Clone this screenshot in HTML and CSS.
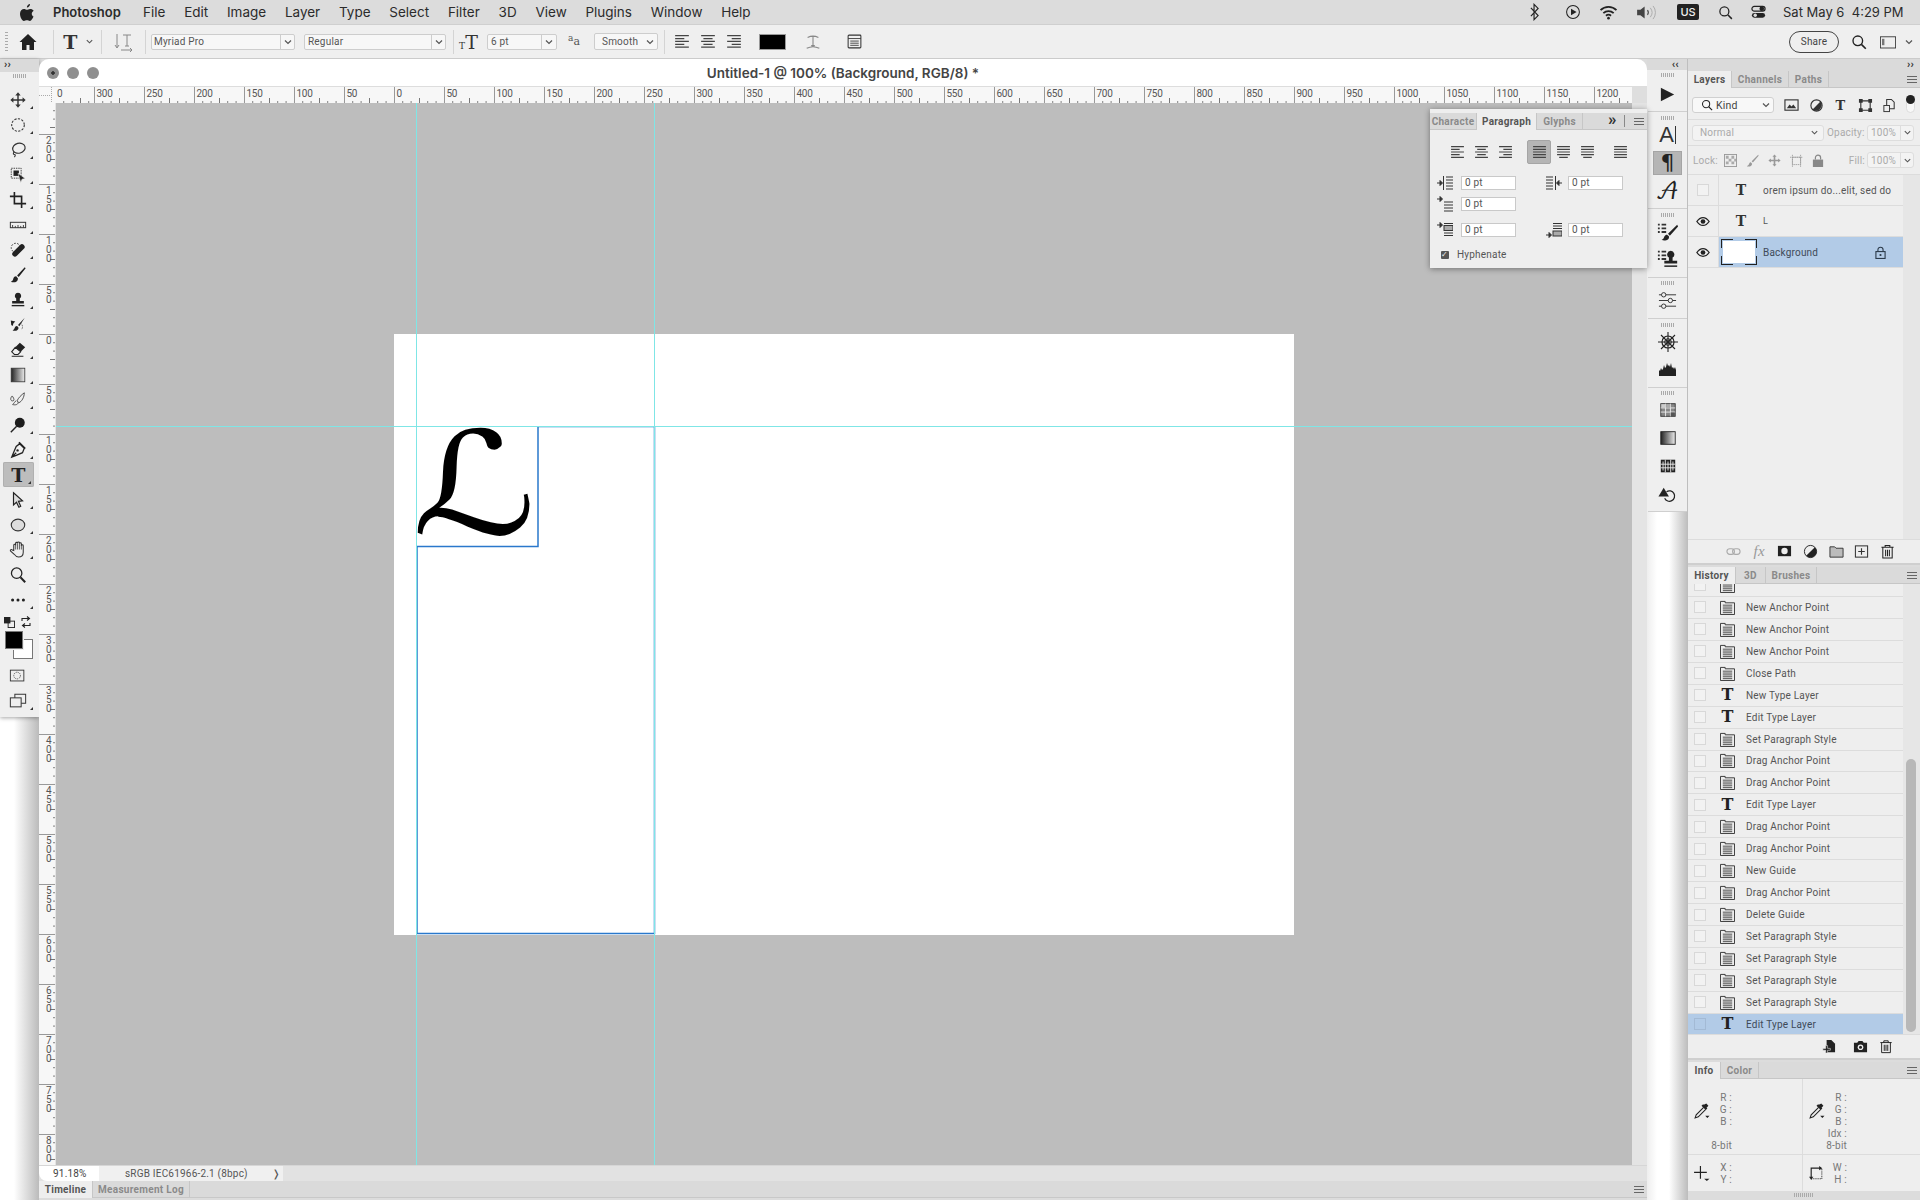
FILE: index.html
```html
<!DOCTYPE html>
<html lang="en">
<head>
  <meta charset="UTF-8">
  <meta name="viewport" content="width=device-width, initial-scale=1.0">
  <title>Photoshop</title>
  <link rel="stylesheet" href="styles.css">
</head>
<body>
  <svg class="sprites" width="0" height="0">
    <defs>
      <linearGradient id="grad-bw" x1="0" x2="1" y1="0" y2="0"><stop offset="0" stop-color="#222"/><stop offset="1" stop-color="#eee"/></linearGradient>
    </defs>
    <symbol id="i-move" viewBox="0 0 20 20"><path fill="#333" d="M10 1.500l3 3.400h-2.200v4.300h4.300V7l3.400 3-3.400 3v-2.200h-4.300v4.300H13l-3 3.400-3-3.400h2.200v-4.300H4.900V13l-3.400-3 3.400-3v2.200h4.300V4.900H7z"/></symbol>
    <symbol id="i-marquee" viewBox="0 0 20 20"><circle cx="10" cy="10" r="7" fill="none" stroke="#333" stroke-width="1.200" stroke-dasharray="2.500 1.500"/></symbol>
    <symbol id="i-lasso" viewBox="0 0 20 20"><ellipse cx="11" cy="8" rx="7" ry="5.500" fill="none" stroke="#333" stroke-width="1.300" transform="rotate(-15 11 8)"/><path d="M6 12c-2 2-1 3 0 3s1.500 1 0 3" fill="none" stroke="#333" stroke-width="1.300"/></symbol>
    <symbol id="i-objsel" viewBox="0 0 20 20"><rect x="2.500" y="2.500" width="11" height="11" fill="none" stroke="#333" stroke-dasharray="1.600 1"/><rect x="5" y="5" width="6" height="6" fill="#222"/><path fill="#222" stroke="#eee" stroke-width=".6" d="M10 8l8 6-3.500.6-1.500 3.600z"/></symbol>
    <symbol id="i-crop" viewBox="0 0 20 20"><path d="M6 1v13h13M1 6h13v13" fill="none" stroke="#222" stroke-width="1.800"/></symbol>
    <symbol id="i-ruler" viewBox="0 0 20 20"><rect x="1.500" y="7" width="17" height="6" fill="none" stroke="#333" stroke-width="1.100"/><path d="M4 13v-3M7 13v-2M10 13v-3M13 13v-2M16 13v-3" stroke="#333"/></symbol>
    <symbol id="i-heal" viewBox="0 0 20 20"><circle cx="7.500" cy="7.500" r="5" fill="none" stroke="#333" stroke-dasharray="2 1.500"/><rect x="2" y="7.500" width="17" height="6" rx="3" fill="#222" transform="rotate(-45 10.500 10.500)"/></symbol>
    <symbol id="i-brush" viewBox="0 0 20 20"><path fill="#222" d="M17.500 1.500L9 10.500l1.800 1.800L18.500 2.500zM8 11.500c-2.500 0-3 2-3.400 3.200C4.300 16 3.500 17 2 17.500c3 1.300 8 .7 8-3.700z"/></symbol>
    <symbol id="i-stamp" viewBox="0 0 20 20"><path fill="#222" d="M10 2a3.500 3.500 0 0 1 2 6.400V11h4.500v3h-13v-3H8V8.400A3.500 3.500 0 0 1 10 2z"/><rect x="3" y="15.500" width="14" height="1.500" fill="#222"/></symbol>
    <symbol id="i-histbrush" viewBox="0 0 20 20"><path fill="#222" d="M17.500 2L10 10l1.500 1.500zM9 11c-2 0-2.500 1.500-3 3-.3 1-1 1.500-2 2 2.500 1 7 .3 6.500-3.300zM2 5l5 1-2 2-1 3-1.500-1z"/><path d="M13 8a5 5 0 0 1 1 7" fill="none" stroke="#555" stroke-dasharray="1.500 1"/></symbol>
    <symbol id="i-eraser" viewBox="0 0 20 20"><path fill="#222" d="M12 2l6 5-5 5-6-5z"/><path fill="none" stroke="#222" stroke-width="1.200" d="M7 7l6 5-3 3H6l-3-3zM3 17h13"/></symbol>
    <symbol id="i-gradient" viewBox="0 0 20 20"><rect x="1.500" y="1.500" width="17" height="17" fill="url(#grad-bw)" stroke="#333"/></symbol>
    <symbol id="i-mixer" viewBox="0 0 20 20"><path d="M17 2c-3 2-7 6-8 9l2 2c3-1 6-6 6-11zM8 11c-2 .5-2 3-4 4 3 1 7 0 6-3M3 6c-2 3-1 5 1 5s2-2 0-5z" fill="none" stroke="#444" stroke-width="1"/></symbol>
    <symbol id="i-dodge" viewBox="0 0 20 20"><circle cx="12" cy="7.500" r="5.500" fill="#1c1c1c"/><path d="M8.500 11.500L2 18" stroke="#222" stroke-width="1.600"/></symbol>
    <symbol id="i-pen" viewBox="0 0 20 20"><path d="M12 3l5 5-2 5-7 3-5 2 2-5 3-7zM3 18l5-5" fill="none" stroke="#222" stroke-width="1.400"/><circle cx="9.500" cy="10.500" r="1.300" fill="#222"/><path d="M11 1.500l7 7" stroke="#222" stroke-width="2"/></symbol>
    <symbol id="i-arrow" viewBox="0 0 20 20"><path d="M5 2l10 9-4.500.5L13 17l-2 1-2.700-5.500L5 15.500z" fill="#ddd" stroke="#222" stroke-width="1.300"/></symbol>
    <symbol id="i-ellipse" viewBox="0 0 20 20"><ellipse cx="10" cy="10" rx="7.500" ry="6.500" fill="#ddd" stroke="#333" stroke-width="1.200"/></symbol>
    <symbol id="i-hand" viewBox="0 0 20 20"><path d="M5 11V5.500a1 1 0 0 1 2 0V3.500a1 1 0 0 1 2 0V3a1 1 0 0 1 2 0v1a1 1 0 0 1 2 0v2a1 1 0 0 1 2 0v7c0 3-2 5-5 5-2 0-3-1-4.500-3L1.500 11.500c-.5-1 1-2 2-1z" fill="none" stroke="#333" stroke-width="1.100"/><path d="M7 5v5M9 3.500V10M11 4v6M13 5v5" stroke="#333" stroke-width=".8"/></symbol>
    <symbol id="i-zoom" viewBox="0 0 20 20"><circle cx="8.500" cy="8" r="5.800" fill="#eee" stroke="#222" stroke-width="1.400"/><path d="M12.700 12.500l5.300 5.500" stroke="#222" stroke-width="2.200"/></symbol>
    <symbol id="i-dots" viewBox="0 0 20 20"><circle cx="4" cy="10" r="1.700" fill="#222"/><circle cx="10" cy="10" r="1.700" fill="#222"/><circle cx="16" cy="10" r="1.700" fill="#222"/></symbol>
    <symbol id="i-swap" viewBox="0 0 12 12"><path d="M2 5V2.500h7M7 .5l2.500 2L7 4.500M10 7v2.500H3M5 7.500l-2.500 2 2.500 2" fill="none" stroke="#222" stroke-width="1.100"/></symbol>
    <symbol id="i-defaults" viewBox="0 0 12 12"><rect x="4.500" y="4.500" width="7" height="7" fill="#eee" stroke="#222"/><rect x="0" y="0" width="7" height="7" fill="#222"/></symbol>
    <symbol id="i-mask" viewBox="0 0 20 20"><rect x="1.500" y="3.500" width="15" height="12" fill="none" stroke="#333"/><circle cx="9" cy="9.500" r="3.700" fill="none" stroke="#444" stroke-dasharray="1.200 1"/></symbol>
    <symbol id="i-screen" viewBox="0 0 20 20"><rect x="6.500" y="2.500" width="12" height="10" fill="none" stroke="#333" stroke-width="1.100"/><rect x="1.500" y="6.500" width="12" height="10" fill="#eee" stroke="#333" stroke-width="1.100"/></symbol>

    <symbol id="i-home" viewBox="0 0 20 20"><path fill="#222" d="M10 2L1.500 10H4v8h4.500v-5h3v5H16v-8h2.500z"/></symbol>
    <symbol id="i-chev" viewBox="0 0 10 10"><path d="M2 3.500l3 3 3-3" fill="none" stroke="#555" stroke-width="1.200"/></symbol>
    <symbol id="i-orient" viewBox="0 0 20 20"><path d="M9 3h8M13 3v11M11 14h4M3 2v13M1 13l2 3 2-3M7 18h11M16 16l2 2-2 2" fill="none" stroke="#888" stroke-width="1"/></symbol>
    <symbol id="i-warp" viewBox="0 0 20 20"><path d="M4 5c4-2 8-2 12 0M10 3.500V14M8 14h4M3 17c4-2 10-2 14 0" fill="none" stroke="#888" stroke-width="1.200"/></symbol>
    <symbol id="i-charpanel" viewBox="0 0 20 20"><rect x="2.500" y="2.500" width="15" height="15" rx="1" fill="none" stroke="#333" stroke-width="1.200"/><path d="M2.500 6.500h15M5 9.500h10M5 12h10M5 14.500h10" stroke="#333"/></symbol>
    <symbol id="i-search" viewBox="0 0 20 20"><circle cx="8.500" cy="8.500" r="6" fill="none" stroke="#222" stroke-width="1.700"/><path d="M13 13l5.500 5.500" stroke="#222" stroke-width="2"/></symbol>
    <symbol id="i-workspace" viewBox="0 0 20 20"><rect x=".5" y="3.500" width="19" height="14" fill="none" stroke="#333" stroke-width="1.100"/><rect x="2.500" y="6" width="3" height="8" fill="#777"/></symbol>
    <symbol id="i-bt" viewBox="0 0 12 20"><path d="M2 5.500l8 8.500-4.500 4.500v-17l4.500 4.500-8 8.500" fill="none" stroke="#222" stroke-width="1.300"/></symbol>
    <symbol id="i-playc" viewBox="0 0 20 20"><circle cx="10" cy="10" r="8" fill="none" stroke="#222" stroke-width="1.300"/><path d="M7.500 6l7 4-7 4z" fill="#222"/></symbol>
    <symbol id="i-wifi" viewBox="0 0 20 16"><path d="M1.500 5.500a12 12 0 0 1 17 0M4.500 8.700a8 8 0 0 1 11 0M7.300 11.500a4 4 0 0 1 5.400 0" fill="none" stroke="#222" stroke-width="1.900"/><circle cx="10" cy="14" r="1.400" fill="#222"/></symbol>
    <symbol id="i-vol" viewBox="0 0 22 16"><path fill="#444" d="M1 5h3.500L9 1.500v13L4.500 11H1z"/><path d="M12 5.500a4 4 0 0 1 0 5" fill="none" stroke="#555" stroke-width="1.300"/><path d="M15 3a8 8 0 0 1 0 10M18 1a11 11 0 0 1 0 14" fill="none" stroke="#aaa" stroke-width="1"/></symbol>
    <symbol id="i-cc" viewBox="0 0 16 14"><rect x="1" y="1" width="14" height="5" rx="2.500" fill="none" stroke="#222" stroke-width="1.300"/><circle cx="11.500" cy="3.500" r="2.500" fill="#222"/><rect x="1" y="8" width="14" height="5" rx="2.500" fill="#222"/><circle cx="4.500" cy="10.500" r="1.800" fill="#ddd"/></symbol>

    <symbol id="i-play" viewBox="0 0 20 20"><path fill="#222" d="M3 3l14 7-14 7z"/></symbol>
    <symbol id="i-listbrush" viewBox="0 0 24 24"><path d="M1 3h2v2H1zM5 3h5v2H5zM1 7h2v2H1zM5 7h5v2H5zM1 11h2v2H1zM5 11h5v2H5z" fill="#333"/><path fill="#222" d="M22 4L12 14l2 2L23 6zM11 15c-3 0-3 3-4 4-.5.700-1 1-2 1.500 3 1.500 9 .5 8-4z"/></symbol>
    <symbol id="i-liststamp" viewBox="0 0 24 24"><path d="M1 3h2v2H1zM5 3h5v2H5zM1 7h2v2H1zM5 7h5v2H5zM1 11h2v2H1zM5 11h5v2H5z" fill="#333"/><path fill="#222" d="M15 3a4 4 0 0 1 2 7.400V14h5v3H8v-3h5v-3.600A4 4 0 0 1 15 3z"/><rect x="8" y="19" width="14" height="1.600" fill="#222"/></symbol>
    <symbol id="i-sliders" viewBox="0 0 20 20"><path d="M1 4h18M1 10h18M1 16h18" stroke="#333"/><circle cx="6" cy="4" r="2.300" fill="#eee" stroke="#333"/><circle cx="13" cy="10" r="2.300" fill="#eee" stroke="#333"/><circle cx="6" cy="16" r="2.300" fill="#eee" stroke="#333"/></symbol>
    <symbol id="i-web" viewBox="0 0 20 20"><circle cx="10" cy="10" r="6" fill="none" stroke="#222" stroke-width="1.200"/><circle cx="10" cy="10" r="3.300" fill="none" stroke="#222"/><path d="M10 0v20M0 10h20M3 3l14 14M17 3L3 17" stroke="#222" stroke-width="1.100"/></symbol>
    <symbol id="i-histo" viewBox="0 0 20 20"><path fill="#222" d="M1 17v-6l1 1 1-3 1 2 1-1 1-4 1 3 1-1 1-4 1 3 1-1 1 2 1-4 1 5 1-1 1 2 1-2 1 3v6z"/></symbol>
    <symbol id="i-swatches" viewBox="0 0 20 20"><rect x="2" y="3" width="16" height="14" fill="#888" stroke="#333"/><path d="M2 7.700h16M2 12.300h16M7.300 3v14M12.700 3v14" stroke="#eee"/><rect x="2.500" y="3.500" width="5" height="4" fill="#ccc"/><rect x="8" y="3.500" width="4.500" height="4" fill="#aaa"/><rect x="13" y="12.700" width="4.500" height="4" fill="#555"/></symbol>
    <symbol id="i-gradbox" viewBox="0 0 20 20"><rect x="2" y="3" width="16" height="14" fill="url(#grad-bw)" stroke="#222"/></symbol>
    <symbol id="i-pattern" viewBox="0 0 20 20"><rect x="2" y="3" width="16" height="14" fill="#222"/><path d="M7 3v14M13 3v14M2 8h16M2 12h16M4.500 5v10M10 5v10M15.500 5v10" stroke="#eee"/></symbol>
    <symbol id="i-histback" viewBox="0 0 20 20"><path fill="#222" d="M6 3l5.500 9H.5z"/><path d="M9 7a5.500 5.500 0 1 1-2 7" fill="none" stroke="#222" stroke-width="1.300"/></symbol>

    <symbol id="i-doc" viewBox="0 0 16 16"><path d="M.5 1.500h5v1.500h10v12.500H.5z" fill="none" stroke="#333"/><path d="M3 5.500h10M3 7.500h10M3 9.500h10M3 11.500h10M3 13.500h10" stroke="#333" stroke-width=".9"/></symbol>
    <symbol id="i-eye" viewBox="0 0 16 12"><path d="M1 6c2-3 4.500-4.500 7-4.500S13 3 15 6c-2 3-4.500 4.500-7 4.500S3 9 1 6z" fill="none" stroke="#222" stroke-width="1.500"/><circle cx="8" cy="6" r="2.700" fill="#222"/></symbol>
    <symbol id="i-lock" viewBox="0 0 12 14"><path d="M3.200 6V4a2.800 2.800 0 0 1 5.600 0v2" fill="none" stroke="currentColor" stroke-width="1.200"/><rect x="1" y="6" width="10" height="7.500" fill="none" stroke="currentColor" stroke-width="1.200"/><circle cx="6" cy="9.700" r="1.200" fill="currentColor"/></symbol>
    <symbol id="i-lockfill" viewBox="0 0 12 14"><path d="M3.200 6V4a2.800 2.800 0 0 1 5.600 0v2" fill="none" stroke="#888" stroke-width="1.300"/><rect x=".5" y="6" width="11" height="8" fill="#888"/></symbol>
    <symbol id="i-f-image" viewBox="0 0 16 16"><rect x="1" y="2" width="14" height="11" fill="none" stroke="#333" stroke-width="1.200"/><path d="M3 11l3-4 2 2 2-2 3 4z" fill="#333"/></symbol>
    <symbol id="i-f-adj" viewBox="0 0 16 16"><circle cx="8" cy="8" r="6" fill="none" stroke="#333" stroke-width="1.200"/><path d="M8 8l4.200-4.200A6 6 0 0 1 3.800 12.200z" fill="#333"/></symbol>
    <symbol id="i-f-shape" viewBox="0 0 16 16"><path d="M3 3h10v10H3z" fill="none" stroke="#333" stroke-width="1.200"/><path d="M1 1h4v4H1zM11 1h4v4h-4zM1 11h4v4H1zM11 11h4v4h-4z" fill="#333"/></symbol>
    <symbol id="i-f-smart" viewBox="0 0 16 16"><path d="M5 1.500h5l3 3v7H5z" fill="none" stroke="#333" stroke-width="1.100"/><rect x="2" y="8" width="6" height="6.500" fill="#eee" stroke="#333"/></symbol>
    <symbol id="i-checker" viewBox="0 0 14 14"><rect x=".5" y=".5" width="13" height="13" fill="#eee" stroke="#999"/><path d="M2 2h3v3H2zM8 2h3v3H8zM5 5h3v3H5zM11 5h2v3h-2zM2 8h3v3H2zM8 8h3v3H8z" fill="#aaa"/></symbol>
    <symbol id="i-lbrush" viewBox="0 0 16 16"><path fill="#999" d="M15 1L7 9l1.500 1.500L15.500 2zM6 10c-2 0-2 2-3 3.500L1 15c2 1 6.500.5 6.500-3z"/></symbol>
    <symbol id="i-lmove" viewBox="0 0 16 16"><path fill="#999" d="M8 .5l2.500 3H9v3.500h3.500V5.500l3 2.500-3 2.500V9H9v3.500h1.500L8 15.500l-2.500-3H7V9H3.500v1.500l-3-2.500 3-2.500V7H7V3.500H5.500z"/></symbol>
    <symbol id="i-lart" viewBox="0 0 16 16"><path d="M3 4h10v9H3zM0 4h16M3 1v15M13 1v15" fill="none" stroke="#999" stroke-dasharray="1.800 .8"/></symbol>

    <symbol id="i-link" viewBox="0 0 16 16"><rect x="1" y="5" width="8" height="6" rx="3" fill="none" stroke="#aaa" stroke-width="1.200"/><rect x="7" y="5" width="8" height="6" rx="3" fill="none" stroke="#aaa" stroke-width="1.200"/></symbol>
    <symbol id="i-addmask" viewBox="0 0 16 16"><rect x="1" y="2" width="14" height="11" fill="#222"/><circle cx="8" cy="7.500" r="3.400" fill="#eee"/></symbol>
    <symbol id="i-adjust" viewBox="0 0 16 16"><circle cx="8" cy="8" r="6.500" fill="#eee" stroke="#222"/><path d="M8 8l4.600-4.600A6.500 6.500 0 0 1 3.400 12.600z" fill="#222"/></symbol>
    <symbol id="i-folder" viewBox="0 0 16 16"><path d="M1 3h5l1.500 1.500H15V14H1z" fill="#bbb" stroke="#333"/></symbol>
    <symbol id="i-new" viewBox="0 0 16 16"><rect x="1.500" y="2" width="13" height="12" fill="none" stroke="#333" stroke-width="1.100"/><path d="M8 4.500v7M4.500 8h7" stroke="#333" stroke-width="1.200"/></symbol>
    <symbol id="i-trash" viewBox="0 0 16 16"><path d="M1.500 3.500h13M5.500 3.500V1.500h5v2M3 3.500V15h10V3.500M6 6v7M8 6v7M10 6v7" fill="none" stroke="#222" stroke-width="1.100"/></symbol>
    <symbol id="i-newdoc" viewBox="0 0 16 16"><path fill="#222" d="M6 1h5l4 4v9H6z"/><path d="M5 7v3H2v2h3v3h2v-3h3v-2H7V7z" fill="#222" stroke="#eee" stroke-width=".6"/></symbol>
    <symbol id="i-camera" viewBox="0 0 16 16"><path fill="#222" d="M1 4h3.500L6 2h4l1.500 2H15v10H1z"/><circle cx="8" cy="8.800" r="3" fill="#eee"/><circle cx="8" cy="8.800" r="1.600" fill="#222"/></symbol>
    <symbol id="i-dropper" viewBox="0 0 16 16"><path d="M10 5L3 12l-1 3 3-1 7-7" fill="#eee" stroke="#222"/><path fill="#222" d="M12.500 1.500l2 2-1.700 1.800.7.700-1.500 1.500-4-4L9.500 2l.7.700z"/><path d="M11.500 13h4l-2 2z" fill="#222"/></symbol>
    <symbol id="i-cross" viewBox="0 0 16 16"><path d="M7 1v12M1 7h12" stroke="#222" stroke-width="1.100"/><path d="M10.500 13h5l-2.500 2z" fill="#222"/></symbol>
    <symbol id="i-rectsel" viewBox="0 0 16 16"><path d="M3 12V3h9" fill="none" stroke="#222" stroke-width="1.100"/><path d="M3 13h10V3" fill="none" stroke="#222" stroke-dasharray="1 1"/><path d="M10.500 1l3 2-3 2zM1 11l2 3 2-3z" fill="#222"/></symbol>

    <symbol id="a-left" viewBox="0 0 14 14"><path d="M1 1.500h12M1 4h8M1 6.500h12M1 9h8M1 11.500h12" stroke="#444" stroke-width="1.100"/></symbol>
    <symbol id="a-center" viewBox="0 0 14 14"><path d="M1 1.500h12M3 4h8M1 6.500h12M3 9h8M1 11.500h12" stroke="#444" stroke-width="1.100"/></symbol>
    <symbol id="a-right" viewBox="0 0 14 14"><path d="M1 1.500h12M5 4h8M1 6.500h12M5 9h8M1 11.500h12" stroke="#444" stroke-width="1.100"/></symbol>
    <symbol id="a-full" viewBox="0 0 14 14"><path d="M1 1.500h12M1 4h12M1 6.500h12M1 9h12M1 11.500h12" stroke="#444" stroke-width="1.100"/></symbol>
    <symbol id="a-full2" viewBox="0 0 14 14"><path d="M1 1.500h12M1 4h12M1 6.500h12M1 9h12M3 11.500h8" stroke="#444" stroke-width="1.100"/></symbol>
    <symbol id="n-left" viewBox="0 0 16 16"><path d="M6.500 1v14M9 2h7M9 5h7M9 8h7M9 11h7M9 14h7" stroke="#333"/><path d="M0 8h3M3 5.500L5.500 8 3 10.500z" stroke="#333" fill="#333"/></symbol>
    <symbol id="n-right" viewBox="0 0 16 16"><path d="M9.500 1v14M0 2h7M0 5h7M0 8h7M0 11h7M0 14h7" stroke="#333"/><path d="M16 8h-3M13 5.500L10.500 8l2.500 2.500z" stroke="#333" fill="#333"/></symbol>
    <symbol id="n-first" viewBox="0 0 16 16"><path d="M7 6h9M7 9h9M7 12h9M7 15h9" stroke="#333"/><path d="M0 3h3M3 .5L5.500 3 3 5.500z" stroke="#333" fill="#333"/></symbol>
    <symbol id="n-before" viewBox="0 0 16 16"><path d="M7 1.500h9M7 11h9M7 13.500h9" stroke="#333"/><rect x="7" y="3.500" width="9" height="5" fill="#aaa" stroke="#333"/><path d="M0 3h3M3 .5L5.500 3 3 5.500z" stroke="#333" fill="#333"/></symbol>
    <symbol id="n-after" viewBox="0 0 16 16"><path d="M7 1.500h9M7 4h9M7 6.500h9" stroke="#333"/><rect x="7" y="9" width="9" height="5" fill="#aaa" stroke="#333"/><path d="M0 13h3M3 10.500L5.500 13 3 15.500z" stroke="#333" fill="#333"/></symbol>
  </svg>

  <header class="menubar">
    <svg class="apple" viewBox="0 0 14 17" width="14" height="17"><path fill="#222" d="M10 0c.2 1.500-1.400 3.600-3.100 3.500C6.700 1.900 8.400.1 10 0zM13.500 12.600c-.8 1.900-2 4.300-3.600 4.300-1.200 0-1.700-.7-3-.7s-1.900.7-3 .7C2 16.900 0 13 0 9.800 0 6.700 2 5 3.900 5c1.300 0 2.300.8 3.100.8S8.700 4.900 10.300 5c.7 0 2.500.3 3.400 1.800-2.800 1.700-2.300 5 0 5.800z"/></svg>
    <strong class="menu-app">Photoshop</strong>
    <nav class="menu-list">
      <span>File</span><span>Edit</span><span>Image</span><span>Layer</span><span>Type</span><span>Select</span><span>Filter</span><span>3D</span><span>View</span><span>Plugins</span><span>Window</span><span>Help</span>
    </nav>
    <div class="status-items">
      <svg class="st-bt" width="11" height="18"><use href="#i-bt"/></svg>
      <svg class="st-play" width="16" height="16"><use href="#i-playc"/></svg>
      <svg class="st-wifi" width="19" height="15"><use href="#i-wifi"/></svg>
      <svg class="st-vol" width="21" height="15"><use href="#i-vol"/></svg>
      <span class="st-us">US</span>
      <svg class="st-search" width="15" height="15"><use href="#i-search"/></svg>
      <svg class="st-cc" width="15" height="14"><use href="#i-cc"/></svg>
      <span class="st-clock">Sat May 6&nbsp;&nbsp;4:29 PM</span>
    </div>
  </header>

  <div class="optionsbar">
    <span class="opt-grip"></span>
    <svg class="opt-home" width="20" height="20"><use href="#i-home"/></svg>
    <span class="opt-div d1"></span>
    <span class="opt-t">T</span>
    <svg class="opt-caret" width="9" height="9"><use href="#i-chev"/></svg>
    <span class="opt-div d2"></span>
    <svg class="opt-orient" width="20" height="20"><use href="#i-orient"/></svg>
    <span class="opt-div d3"></span>
    <div class="opt-select sel-font"><span>Myriad Pro</span><i><svg width="10" height="10"><use href="#i-chev"/></svg></i></div>
    <div class="opt-select sel-style"><span>Regular</span><i><svg width="10" height="10"><use href="#i-chev"/></svg></i></div>
    <span class="opt-div d4"></span>
    <span class="opt-size"><small>T</small>T</span>
    <div class="opt-select sel-size"><span>6 pt</span><i><svg width="10" height="10"><use href="#i-chev"/></svg></i></div>
    <span class="opt-aa"><sup>a</sup>a</span>
    <div class="opt-select sel-aa"><span>Smooth</span><svg width="10" height="10"><use href="#i-chev"/></svg></div>
    <span class="opt-div d5"></span>
    <svg class="opt-a1" width="16" height="16"><use href="#a-left"/></svg>
    <svg class="opt-a2" width="16" height="16"><use href="#a-center"/></svg>
    <svg class="opt-a2" width="16" height="16"><use href="#a-right"/></svg>
    <span class="opt-swatch"></span>
    <svg class="opt-warp" width="18" height="18"><use href="#i-warp"/></svg>
    <svg class="opt-panel" width="17" height="17"><use href="#i-charpanel"/></svg>
    <button class="share-btn">Share</button>
    <svg class="opt-find" width="16" height="16"><use href="#i-search"/></svg>
    <svg class="opt-ws" width="16" height="16"><use href="#i-workspace"/></svg>
    <svg class="opt-wschev" width="10" height="10"><use href="#i-chev"/></svg>
  </div>

  <div class="workspace">
    <aside class="toolbox-wrap">
      <div class="toolbox">
        <div class="collapse-strip left">&rsaquo;&rsaquo;</div>
        <div class="grip"></div>
        <div class="tool more"><svg width="18" height="18"><use href="#i-move"/></svg></div>
        <div class="tool more"><svg width="18" height="18"><use href="#i-marquee"/></svg></div>
        <div class="tool more"><svg width="18" height="18"><use href="#i-lasso"/></svg></div>
        <div class="tool more"><svg width="18" height="18"><use href="#i-objsel"/></svg></div>
        <div class="tool more"><svg width="18" height="18"><use href="#i-crop"/></svg></div>
        <div class="tool more"><svg width="18" height="18"><use href="#i-ruler"/></svg></div>
        <div class="tool more"><svg width="18" height="18"><use href="#i-heal"/></svg></div>
        <div class="tool more"><svg width="18" height="18"><use href="#i-brush"/></svg></div>
        <div class="tool more"><svg width="18" height="18"><use href="#i-stamp"/></svg></div>
        <div class="tool more"><svg width="18" height="18"><use href="#i-histbrush"/></svg></div>
        <div class="tool more"><svg width="18" height="18"><use href="#i-eraser"/></svg></div>
        <div class="tool more"><svg width="16" height="16"><use href="#i-gradient"/></svg></div>
        <div class="tool more"><svg width="18" height="18"><use href="#i-mixer"/></svg></div>
        <div class="tool more"><svg width="18" height="18"><use href="#i-dodge"/></svg></div>
        <div class="tool more"><svg width="18" height="18"><use href="#i-pen"/></svg></div>
        <div class="tool more active"><span class="tool-t">T</span></div>
        <div class="tool more"><svg width="18" height="18"><use href="#i-arrow"/></svg></div>
        <div class="tool more"><svg width="18" height="18"><use href="#i-ellipse"/></svg></div>
        <div class="tool more"><svg width="19" height="19"><use href="#i-hand"/></svg></div>
        <div class="tool"><svg width="18" height="18"><use href="#i-zoom"/></svg></div>
        <div class="tool more"><svg width="18" height="18"><use href="#i-dots"/></svg></div>
        <div class="color-mini">
          <svg width="11" height="11"><use href="#i-defaults"/></svg>
          <svg width="12" height="12"><use href="#i-swap"/></svg>
        </div>
        <div class="color-big"><span class="bg-chip"></span><span class="fg-chip"></span></div>
        <div class="tool tool-mask"><svg width="18" height="18"><use href="#i-mask"/></svg></div>
        <div class="tool more tool-screen"><svg width="18" height="18"><use href="#i-screen"/></svg></div>
      </div>
    </aside>

    <main class="docwindow">
      <div class="doc-title">
        <span class="light first"></span><span class="light"></span><span class="light"></span>
        <span class="doc-name">Untitled-1 @ 100% (Background, RGB/8) *</span>
      </div>
      <div class="ruler-row">
        <div class="ruler-corner"></div>
        <div class="hruler">
          <div class="hcell stub"><span>0</span></div>
          <div class="hcell"><span>300</span></div><div class="hcell"><span>250</span></div><div class="hcell"><span>200</span></div><div class="hcell"><span>150</span></div><div class="hcell"><span>100</span></div><div class="hcell"><span>50</span></div><div class="hcell"><span>0</span></div>
          <div class="hcell"><span>50</span></div><div class="hcell"><span>100</span></div><div class="hcell"><span>150</span></div><div class="hcell"><span>200</span></div><div class="hcell"><span>250</span></div><div class="hcell"><span>300</span></div><div class="hcell"><span>350</span></div><div class="hcell"><span>400</span></div>
          <div class="hcell"><span>450</span></div><div class="hcell"><span>500</span></div><div class="hcell"><span>550</span></div><div class="hcell"><span>600</span></div><div class="hcell"><span>650</span></div><div class="hcell"><span>700</span></div><div class="hcell"><span>750</span></div><div class="hcell"><span>800</span></div>
          <div class="hcell"><span>850</span></div><div class="hcell"><span>900</span></div><div class="hcell"><span>950</span></div><div class="hcell"><span>1000</span></div><div class="hcell"><span>1050</span></div><div class="hcell"><span>1100</span></div><div class="hcell"><span>1150</span></div><div class="hcell"><span>1200</span></div>
        </div>
        <div class="ruler-end"></div>
      </div>
      <div class="doc-main">
        <div class="vruler">
          <div class="vcell stub"></div>
          <div class="vcell"><span>200</span></div><div class="vcell"><span>150</span></div><div class="vcell"><span>100</span></div><div class="vcell"><span>50</span></div><div class="vcell"><span>0</span></div>
          <div class="vcell"><span>50</span></div><div class="vcell"><span>100</span></div><div class="vcell"><span>150</span></div><div class="vcell"><span>200</span></div><div class="vcell"><span>250</span></div><div class="vcell"><span>300</span></div><div class="vcell"><span>350</span></div>
          <div class="vcell"><span>400</span></div><div class="vcell"><span>450</span></div><div class="vcell"><span>500</span></div><div class="vcell"><span>550</span></div><div class="vcell"><span>600</span></div><div class="vcell"><span>650</span></div><div class="vcell"><span>700</span></div><div class="vcell"><span>750</span></div><div class="vcell"><span>800</span></div>
        </div>
        <div class="canvas">
          <div class="page"></div>
          <svg class="textbox" width="240" height="510" viewBox="0 0 240 510"><path d="M122 .5H238.500V507.500H1V120.500H122z" fill="none" stroke="#2a78cc" stroke-width="1.500"/></svg>
          <span class="script-l">&#8466;</span>
          <span class="guide-v g1"></span>
          <span class="guide-v g2"></span>
          <span class="guide-h"></span>
        </div>
        <div class="scroll-v"></div>
      </div>
      <div class="doc-status">
        <span class="zoom-val">91.18%</span>
        <span class="profile">sRGB IEC61966-2.1 (8bpc)<b>&#x276D;</b></span>
      </div>
      <div class="timeline-tabs">
        <span class="tab w54">Timeline</span>
        <span class="tab w97 off">Measurement Log</span>
        <span class="burger"></span>
      </div>

      <section class="float-panel">
        <div class="tabs">
          <span class="tab w47 off">Characte</span>
          <span class="tab w60">Paragraph</span>
          <span class="tab w46 off">Glyphs</span>
          <span class="fp-more">&#187;</span>
          <span class="fp-sep"></span>
          <span class="burger"></span>
        </div>
        <div class="align-row">
          <svg class="al1" width="15" height="15"><use href="#a-left"/></svg>
          <svg class="al2" width="15" height="15"><use href="#a-center"/></svg>
          <svg class="al2" width="15" height="15"><use href="#a-right"/></svg>
          <span class="al-on"><svg width="15" height="15"><use href="#a-full"/></svg></span>
          <svg class="al3" width="15" height="15"><use href="#a-full2"/></svg>
          <svg class="al2" width="15" height="15"><use href="#a-full2"/></svg>
          <svg class="al4" width="15" height="15"><use href="#a-full"/></svg>
        </div>
        <div class="fields">
          <div class="field-row r1">
            <svg width="16" height="16"><use href="#n-left"/></svg><span class="pt-field">0 pt</span>
            <svg class="f-right" width="16" height="16"><use href="#n-right"/></svg><span class="pt-field">0 pt</span>
          </div>
          <div class="field-row r2">
            <svg width="16" height="16"><use href="#n-first"/></svg><span class="pt-field">0 pt</span>
          </div>
          <div class="field-row r3">
            <svg width="16" height="16"><use href="#n-before"/></svg><span class="pt-field">0 pt</span>
            <svg class="f-right" width="16" height="16"><use href="#n-after"/></svg><span class="pt-field">0 pt</span>
          </div>
        </div>
        <label class="hyphen"><span class="hy-box">&#10003;</span>Hyphenate</label>
      </section>
    </main>

    <aside class="dock">
      <div class="collapse-strip dock-top">&lsaquo;&lsaquo;</div>
      <div class="dock-group g-one"><div class="grip"></div><div class="dock-item"><svg width="19" height="19"><use href="#i-play"/></svg></div></div>
      <div class="dock-group g-two"><div class="grip"></div>
        <div class="dock-item"><span class="dk-a">A<i></i></span></div>
        <div class="dock-item on"><span class="dk-p">&para;</span></div>
        <div class="dock-item"><span class="dk-s">&#119964;</span></div>
      </div>
      <div class="dock-group g-three"><div class="grip"></div>
        <div class="dock-item"><svg width="22" height="22"><use href="#i-listbrush"/></svg></div>
        <div class="dock-item"><svg width="22" height="22"><use href="#i-liststamp"/></svg></div>
      </div>
      <div class="dock-group g-four"><div class="grip"></div><div class="dock-item"><svg width="19" height="19"><use href="#i-sliders"/></svg></div></div>
      <div class="dock-group g-five"><div class="grip"></div>
        <div class="dock-item"><svg width="20" height="20"><use href="#i-web"/></svg></div>
        <div class="dock-item"><svg width="20" height="20"><use href="#i-histo"/></svg></div>
      </div>
      <div class="dock-group g-six"><div class="grip"></div>
        <div class="dock-item"><svg width="18" height="18"><use href="#i-swatches"/></svg></div>
        <div class="dock-item"><svg width="18" height="18"><use href="#i-gradbox"/></svg></div>
        <div class="dock-item"><svg width="18" height="18"><use href="#i-pattern"/></svg></div>
        <div class="dock-item"><svg width="19" height="19"><use href="#i-histback"/></svg></div>
      </div>
    </aside>

    <aside class="panels">
      <div class="collapse-strip panels-top">&rsaquo;&rsaquo;</div>

      <section class="panel layers">
        <div class="tabs">
          <span class="tab w44">Layers</span><span class="tab w57 off">Channels</span><span class="tab w40 off">Paths</span><span class="burger"></span>
        </div>
        <div class="filter-row">
          <div class="kind"><svg width="12" height="12"><use href="#i-search"/></svg><span>Kind</span><svg class="kind-chev" width="10" height="10"><use href="#i-chev"/></svg></div>
          <svg class="f-i1" width="15" height="15"><use href="#i-f-image"/></svg>
          <svg class="f-i" width="15" height="15"><use href="#i-f-adj"/></svg>
          <span class="f-t">T</span>
          <svg class="f-i" width="15" height="15"><use href="#i-f-shape"/></svg>
          <svg class="f-i" width="15" height="15"><use href="#i-f-smart"/></svg>
          <span class="f-toggle"></span>
        </div>
        <div class="blend-row">
          <div class="dim-select blend"><span>Normal</span><svg width="9" height="9"><use href="#i-chev"/></svg></div>
          <span class="dim-label">Opacity:</span>
          <div class="dim-select pct"><span>100%</span><i><svg width="9" height="9"><use href="#i-chev"/></svg></i></div>
        </div>
        <div class="lock-row">
          <span class="dim-label">Lock:</span>
          <svg width="13" height="13"><use href="#i-checker"/></svg>
          <svg width="13" height="13"><use href="#i-lbrush"/></svg>
          <svg width="13" height="13"><use href="#i-lmove"/></svg>
          <svg width="13" height="13"><use href="#i-lart"/></svg>
          <svg width="12" height="13"><use href="#i-lockfill"/></svg>
          <span class="dim-label fill">Fill:</span>
          <div class="dim-select pct"><span>100%</span><i><svg width="9" height="9"><use href="#i-chev"/></svg></i></div>
        </div>
        <div class="layer-list">
          <div class="layer">
            <div class="vis"><span class="chk"></span></div>
            <span class="layer-t">T</span><span class="layer-name">orem ipsum do...elit, sed do</span>
          </div>
          <div class="layer">
            <div class="vis"><svg width="14" height="11"><use href="#i-eye"/></svg></div>
            <span class="layer-t">T</span><span class="layer-name small">L</span>
          </div>
          <div class="layer picked">
            <div class="vis"><svg width="14" height="11"><use href="#i-eye"/></svg></div>
            <span class="thumb"></span><span class="layer-name bg">Background</span>
            <svg class="layer-lock" width="11" height="13"><use href="#i-lock"/></svg>
          </div>
        </div>
        <div class="panel-foot layers-foot">
          <svg width="15" height="15"><use href="#i-link"/></svg>
          <span class="fx">fx</span>
          <svg width="15" height="15"><use href="#i-addmask"/></svg>
          <svg class="has-more" width="15" height="15"><use href="#i-adjust"/></svg>
          <svg width="15" height="15"><use href="#i-folder"/></svg>
          <svg width="15" height="15"><use href="#i-new"/></svg>
          <svg width="15" height="15"><use href="#i-trash"/></svg>
        </div>
      </section>

      <section class="panel history">
        <div class="tabs">
          <span class="tab w48">History</span><span class="tab w30 off">3D</span><span class="tab w51 off">Brushes</span><span class="burger"></span>
        </div>
        <div class="history-body">
          <div class="history-list">
            <div class="hrow cut"><span class="chk"></span><svg width="15" height="15"><use href="#i-doc"/></svg><span></span></div>
            <div class="hrow"><span class="chk"></span><svg width="15" height="15"><use href="#i-doc"/></svg><span>New Anchor Point</span></div>
            <div class="hrow"><span class="chk"></span><svg width="15" height="15"><use href="#i-doc"/></svg><span>New Anchor Point</span></div>
            <div class="hrow"><span class="chk"></span><svg width="15" height="15"><use href="#i-doc"/></svg><span>New Anchor Point</span></div>
            <div class="hrow"><span class="chk"></span><svg width="15" height="15"><use href="#i-doc"/></svg><span>Close Path</span></div>
            <div class="hrow"><span class="chk"></span><b class="h-t">T</b><span>New Type Layer</span></div>
            <div class="hrow"><span class="chk"></span><b class="h-t">T</b><span>Edit Type Layer</span></div>
            <div class="hrow"><span class="chk"></span><svg width="15" height="15"><use href="#i-doc"/></svg><span>Set Paragraph Style</span></div>
            <div class="hrow"><span class="chk"></span><svg width="15" height="15"><use href="#i-doc"/></svg><span>Drag Anchor Point</span></div>
            <div class="hrow"><span class="chk"></span><svg width="15" height="15"><use href="#i-doc"/></svg><span>Drag Anchor Point</span></div>
            <div class="hrow"><span class="chk"></span><b class="h-t">T</b><span>Edit Type Layer</span></div>
            <div class="hrow"><span class="chk"></span><svg width="15" height="15"><use href="#i-doc"/></svg><span>Drag Anchor Point</span></div>
            <div class="hrow"><span class="chk"></span><svg width="15" height="15"><use href="#i-doc"/></svg><span>Drag Anchor Point</span></div>
            <div class="hrow"><span class="chk"></span><svg width="15" height="15"><use href="#i-doc"/></svg><span>New Guide</span></div>
            <div class="hrow"><span class="chk"></span><svg width="15" height="15"><use href="#i-doc"/></svg><span>Drag Anchor Point</span></div>
            <div class="hrow"><span class="chk"></span><svg width="15" height="15"><use href="#i-doc"/></svg><span>Delete Guide</span></div>
            <div class="hrow"><span class="chk"></span><svg width="15" height="15"><use href="#i-doc"/></svg><span>Set Paragraph Style</span></div>
            <div class="hrow"><span class="chk"></span><svg width="15" height="15"><use href="#i-doc"/></svg><span>Set Paragraph Style</span></div>
            <div class="hrow"><span class="chk"></span><svg width="15" height="15"><use href="#i-doc"/></svg><span>Set Paragraph Style</span></div>
            <div class="hrow"><span class="chk"></span><svg width="15" height="15"><use href="#i-doc"/></svg><span>Set Paragraph Style</span></div>
            <div class="hrow picked"><span class="chk"></span><b class="h-t">T</b><span>Edit Type Layer</span></div>
          </div>
          <div class="history-scroll"><span class="thumb-bar"></span></div>
        </div>
        <div class="panel-foot history-foot">
          <svg width="15" height="15"><use href="#i-newdoc"/></svg>
          <svg width="15" height="15"><use href="#i-camera"/></svg>
          <svg class="foot-trash" width="14" height="15"><use href="#i-trash"/></svg>
        </div>
      </section>

      <section class="panel info">
        <div class="tabs">
          <span class="tab w33">Info</span><span class="tab w38 off">Color</span><span class="burger"></span>
        </div>
        <div class="info-grid">
          <div class="info-cell">
            <svg width="17" height="17"><use href="#i-dropper"/></svg>
            <div class="info-labels"><span>R :</span><span>G :</span><span>B :</span><span>&nbsp;</span><span>8-bit</span></div>
          </div>
          <div class="info-cell">
            <svg width="17" height="17"><use href="#i-dropper"/></svg>
            <div class="info-labels"><span>R :</span><span>G :</span><span>B :</span><span>Idx :</span><span>8-bit</span></div>
          </div>
          <div class="info-cell low">
            <svg width="17" height="17"><use href="#i-cross"/></svg>
            <div class="info-labels"><span>X :</span><span>Y :</span></div>
          </div>
          <div class="info-cell low">
            <svg width="17" height="17"><use href="#i-rectsel"/></svg>
            <div class="info-labels"><span>W :</span><span>H :</span></div>
          </div>
        </div>
        <div class="info-foot"><span class="grip"></span></div>
      </section>
    </aside>
  </div>
</body>
</html>
```

FILE: styles.css
```css
* {
  box-sizing: border-box;
}
html, body {
  margin: 0;
  padding: 0;
}
body {
  width: 1920px;
  height: 1200px;
  overflow: hidden;
  display: flex;
  flex-direction: column;
  background: #bdbdbd;
  font-family: Roboto, "Liberation Sans", sans-serif;
  font-size: 10px;
  letter-spacing: .2px;
  color: #555;
}
svg {
  display: block;
  flex: none;
}
.sprites {
  position: absolute;
}

/* mac menu bar */
.menubar {
  height: 25px;
  flex: none;
  display: flex;
  align-items: center;
  background: #dcdcdc;
  border-bottom: 1px solid #cfcfcf;
  font-family: Inter, "Liberation Sans", sans-serif;
  font-size: 13.500px;
  letter-spacing: 0;
  color: #2b2b2b;
}
.apple {
  margin-left: 20px;
}
.menu-app {
  margin-left: 19px;
  font-weight: 600;
  font-size: 13px;
  width: 69px;
}
.menu-list {
  margin-left: 21px;
  display: flex;
  gap: 18.750px;
}
.status-items {
  margin-left: auto;
  display: flex;
  align-items: center;
}
.st-bt { margin-right: 25px; }
.st-play { margin-right: 18px; }
.st-wifi { margin-right: 18px; }
.st-vol { margin-right: 20px; }
.st-us {
  width: 22px;
  height: 16px;
  line-height: 16px;
  text-align: center;
  background: #222;
  color: #eee;
  border-radius: 2px;
  font-size: 11px;
  font-weight: 500;
  margin-right: 19px;
}
.st-search { margin-right: 18px; }
.st-cc { margin-right: 17px; }
.st-clock {
  width: 137px;
  font-size: 13px;
}

/* options bar */
.optionsbar {
  height: 34px;
  flex: none;
  display: flex;
  align-items: center;
  background: #efefef;
  border-bottom: 1px solid #cbcbcb;
}
.opt-grip {
  width: 3px;
  height: 20px;
  margin-left: 5px;
  background: repeating-linear-gradient(#aaa 0 1px, transparent 1px 3px);
}
.opt-home { margin-left: 10px; }
.opt-div {
  width: 1px;
  height: 24px;
  background: #d4d4d4;
}
.d1 { margin-left: 15px; }
.d2 { margin-left: 7px; }
.d3 { margin-left: 11px; }
.d4 { margin-left: 7px; }
.d5 { margin-left: 6px; }
.opt-t {
  margin-left: 8px;
  width: 17px;
  text-align: center;
  font: bold 19px "DejaVu Serif", serif;
  color: #333;
}
.opt-caret { margin-left: 6px; }
.opt-orient { margin-left: 12px; }
.opt-select {
  height: 16px;
  display: flex;
  align-items: center;
  justify-content: space-between;
  background: #f7f7f7;
  border: 1px solid #cdcdcd;
  border-radius: 2px;
  padding-left: 2px;
  font-size: 10px;
  color: #555;
}
.opt-select i {
  width: 14px;
  height: 100%;
  border-left: 1px solid #cdcdcd;
  display: flex;
  align-items: center;
  justify-content: center;
}
.sel-font { margin-left: 5px; width: 144px; }
.sel-style { margin-left: 9px; width: 142px; padding-left: 3px; }
.sel-size { margin-left: 8px; width: 70px; padding-left: 3px; }
.sel-size i { width: 15px; }
.sel-aa {
  margin-left: 10px;
  width: 64px;
  height: 17px;
  padding: 0 2px 0 7px;
}
.opt-size {
  margin-left: 5px;
  width: 20px;
  font: 19px "DejaVu Serif", serif;
  color: #333;
  white-space: nowrap;
}
.opt-size small {
  font-size: 9px;
}
.opt-aa {
  margin-left: 11px;
  width: 16px;
  font: 11px "DejaVu Serif", serif;
  white-space: nowrap;
}
.opt-aa sup {
  font-size: 9px;
  vertical-align: 4px;
  line-height: 0;
}
.opt-a1 { margin-left: 9px; }
.opt-a2 { margin-left: 10px; }
.opt-swatch {
  margin-left: 17px;
  width: 27px;
  height: 16px;
  background: #000;
  border: 1px solid #999;
}
.opt-warp { margin-left: 18px; }
.opt-panel { margin-left: 24px; }
.share-btn {
  margin-left: auto;
  width: 50px;
  height: 22px;
  padding: 0;
  border: 1px solid #444;
  border-radius: 11px;
  background: #efefef;
  font: 10px Roboto, sans-serif;
  letter-spacing: .2px;
  color: #444;
}
.opt-find { margin-left: 12px; }
.opt-ws { margin-left: 13px; }
.opt-wschev { margin-left: 8px; margin-right: 6px; }

/* main row */
.workspace {
  flex: 1;
  min-height: 0;
  display: flex;
  background: #dcdcdc;
}
.collapse-strip {
  height: 12px;
  background: #dadada;
  font-size: 11px;
  line-height: 11px;
  color: #333;
  font-weight: 700;
}
.grip {
  height: 4px;
  background: repeating-linear-gradient(90deg, #aaa 0 1px, transparent 1px 2px) center / 14px 4px no-repeat;
}

/* tools */
.toolbox-wrap {
  width: 39px;
  flex: none;
  background: linear-gradient(90deg, #fff 0, #fff 14px, #bbb 39px);
}
.toolbox {
  height: 658px;
  background: #efefef;
  box-shadow: 0 1px 4px rgba(0, 0, 0, .35);
}
.toolbox .collapse-strip {
  padding-left: 4px;
  height: 13px;
}
.toolbox .grip {
  margin-top: 2px;
  margin-bottom: 9px;
}
.tool {
  position: relative;
  height: 25px;
  width: 39px;
  display: flex;
  align-items: center;
  justify-content: center;
  padding-right: 3px;
}
.tool.more::after {
  content: "";
  position: absolute;
  right: 6px;
  bottom: 3px;
  border-left: 3px solid transparent;
  border-bottom: 3px solid #333;
}
.tool.active {
  margin-left: 3px;
  width: 31px;
  padding-right: 0;
  background: #bdbdbd;
  border-radius: 2px;
  box-shadow: inset 0 0 0 1px #b0b0b0;
}
.tool.active::after {
  right: 3px;
}
.tool-t {
  font: bold 19px "DejaVu Serif", serif;
  color: #222;
}
.color-mini {
  height: 20px;
  display: flex;
  align-items: center;
  justify-content: space-between;
  padding: 0 7px 0 4px;
}
.color-big {
  position: relative;
  height: 29px;
  margin-top: -1px;
}
.fg-chip, .bg-chip {
  position: absolute;
  border: 1px solid #777;
}
.fg-chip {
  left: 5px;
  top: 0;
  width: 18px;
  height: 18px;
  background: #000;
  box-shadow: 0 0 0 1px #efefef;
}
.bg-chip {
  left: 13px;
  top: 8px;
  width: 20px;
  height: 20px;
  background: #fff;
}
.tool-mask { margin-top: 3px; }

/* document window */
.docwindow {
  position: relative;
  width: 1608px;
  flex: none;
  height: 1139px;
  display: flex;
  flex-direction: column;
  background: #e4e4e4;
  border-radius: 10px 10px 0 0;
}
.doc-title {
  height: 28px;
  flex: none;
  position: relative;
  display: flex;
  align-items: center;
  background: #fff;
  border-radius: 10px 10px 0 0;
  border-bottom: 1px solid #ddd;
  padding-left: 8px;
}
.light {
  width: 12px;
  height: 12px;
  border-radius: 50%;
  background: #8f8f8f;
  margin-right: 8px;
}
.light.first {
  background: radial-gradient(circle, #333 0 1.500px, #8f8f8f 2px);
}
.doc-name {
  position: absolute;
  left: 0;
  width: 1608px;
  text-align: center;
  font: 600 13.500px Inter, "Liberation Sans", sans-serif;
  letter-spacing: 0;
  color: #444;
}
.ruler-row {
  height: 16px;
  flex: none;
  display: flex;
}
.ruler-corner {
  width: 17px;
  flex: none;
  background:
    repeating-linear-gradient(90deg, #aaa 0 1px, transparent 1px 2px) 0 8px / 12px 1px no-repeat,
    repeating-linear-gradient(#aaa 0 1px, transparent 1px 2px) 12px 0 / 1px 16px no-repeat,
    #f7f7f7;
}
.hruler {
  width: 1576px;
  flex: none;
  display: flex;
  overflow: hidden;
  background: #f7f7f7;
}
.hcell {
  width: 50px;
  flex: none;
  border-left: 1px solid #999;
  padding-left: 1px;
  font-size: 10px;
  letter-spacing: -.2px;
  line-height: 14px;
  color: #555;
  background-image: linear-gradient(#777, #777), linear-gradient(90deg, #777 1px, transparent 1px);
  background-position: 24px bottom, 7.300px bottom;
  background-size: 1px 5px, 8.330px 2px;
  background-repeat: no-repeat, repeat-x;
}
.hcell.stub {
  width: 38.400px;
  border-left: none;
  padding-left: 1px;
}
.ruler-end {
  flex: 1;
  background: #dedede;
}
.doc-main {
  flex: 1;
  min-height: 0;
  display: flex;
}
.vruler {
  width: 17px;
  flex: none;
  overflow: hidden;
  background: #f7f7f7;
  border-right: 1px solid #e4e4e4;
}
.vcell {
  height: 50px;
  border-top: 1px solid #999;
  padding-left: 7px;
  font-size: 10px;
  color: #555;
  background-image: linear-gradient(#777, #777), linear-gradient(#777 1px, transparent 1px);
  background-position: right 24px, right 7.300px;
  background-size: 5px 1px, 2px 8.330px;
  background-repeat: no-repeat, repeat-y;
}
.vcell span {
  display: block;
  width: 1ch;
  word-break: break-all;
  line-height: 9px;
  padding-top: 1px;
}
.vcell.stub {
  height: 31px;
  border-top: none;
}
.canvas {
  position: relative;
  width: 1576px;
  flex: none;
  background: #bdbdbd;
  overflow: hidden;
}
.page {
  position: absolute;
  left: 338px;
  top: 231px;
  width: 900px;
  height: 601px;
  background: #fff;
}
.guide-v, .guide-h {
  position: absolute;
  background: #7fe6e6;
}
.guide-v {
  top: 0;
  bottom: 0;
  width: 1px;
}
.g1 { left: 360px; }
.g2 { left: 598px; }
.guide-h {
  left: 0;
  right: 0;
  top: 323px;
  height: 1px;
}
.textbox {
  position: absolute;
  left: 360px;
  top: 323px;
}
.script-l {
  position: absolute;
  left: 356px;
  top: 310px;
  font: 143px/1 "DejaVu Sans", sans-serif;
  letter-spacing: 0;
  color: #000;
  transform: scaleX(1.21);
  transform-origin: left top;
}
.scroll-v {
  flex: 1;
  background: #e4e4e4;
}
.doc-status {
  height: 16px;
  flex: none;
  display: flex;
  background: #e2e2e2;
  border-top: 1px solid #d6d6d6;
  font-size: 10px;
  line-height: 15px;
  color: #555;
}
.zoom-val {
  width: 60px;
  background: #fff;
  padding-left: 14px;
  border-radius: 0 0 0 8px;
  color: #444;
}
.profile {
  position: relative;
  width: 184px;
  background: #f0f0f0;
  padding-left: 26px;
}
.profile b {
  position: absolute;
  right: 3px;
  top: 0;
  font-weight: 400;
}
.timeline-tabs {
  height: 17px;
  flex: none;
  display: flex;
  background: #dadada;
  border-bottom: 1px solid #c8c8c8;
  position: relative;
}

/* tabs shared */
.tabs {
  height: 17px;
  flex: none;
  display: flex;
  background: #dadada;
  border-bottom: 1px solid #c6c6c6;
  position: relative;
}
.tab {
  height: 17px;
  flex: none;
  text-align: center;
  font-weight: 700;
  font-size: 10px;
  line-height: 17px;
  letter-spacing: .3px;
  color: #555;
  background: #eee;
  border-right: 1px solid #c6c6c6;
  white-space: nowrap;
}
.tab.off {
  color: #8a8a8a;
  background: transparent;
  height: 16px;
}
.w30 { width: 30px; }
.w33 { width: 33px; }
.w38 { width: 38px; }
.w40 { width: 40px; }
.w44 { width: 44px; }
.w46 { width: 46px; }
.w47 { width: 47px; }
.w48 { width: 48px; }
.w51 { width: 51px; }
.w54 { width: 54px; }
.w57 { width: 57px; }
.w60 { width: 60px; }
.w97 { width: 97px; }
.burger {
  position: absolute;
  right: 3px;
  top: 5px;
  width: 10px;
  height: 7px;
  background: repeating-linear-gradient(#666 0 1px, transparent 1px 3px);
}

/* floating paragraph panel */
.float-panel {
  position: absolute;
  left: 1391px;
  top: 50px;
  width: 217px;
  height: 159px;
  background: #eee;
  box-shadow: 0 1px 6px rgba(0, 0, 0, .4);
  padding-top: 4px;
  z-index: 3;
}
.fp-more {
  position: absolute;
  left: 178px;
  top: -2px;
  font-size: 17px;
  line-height: 17px;
  font-weight: 700;
  color: #333;
}
.fp-sep {
  position: absolute;
  left: 194px;
  top: 2px;
  width: 1px;
  height: 12px;
  background: #888;
}
.align-row {
  display: flex;
  align-items: center;
  height: 28px;
  margin-top: 8px;
  padding-left: 20px;
}
.al2 { margin-left: 9px; }
.al-on {
  margin-left: 14px;
  width: 24px;
  height: 24px;
  display: flex;
  align-items: center;
  justify-content: center;
  background: #b5b5b5;
  border-radius: 2px;
  border: 1px solid #a5a5a5;
}
.al3 { margin-left: 5px; }
.al4 { margin-left: 18px; }
.fields {
  margin-top: 10px;
  padding-left: 7px;
}
.field-row {
  display: flex;
  align-items: center;
  height: 14px;
}
.field-row svg { margin-right: 8px; }
.field-row .f-right { margin-left: 30px; margin-right: 6px; }
.r2 { margin-top: 7px; }
.r3 { margin-top: 12px; }
.pt-field {
  width: 55px;
  height: 14px;
  background: #fff;
  border: 1px solid #c9c9c9;
  padding-left: 3px;
  line-height: 12px;
  font-size: 10px;
}
.hyphen {
  margin: 12px 0 0 11px;
  display: flex;
  align-items: center;
  font-size: 10px;
  color: #555;
  gap: 8px;
}
.hy-box {
  width: 8px;
  height: 8px;
  background: #555;
  color: #eee;
  border-radius: 1px;
  font-size: 8px;
  line-height: 8px;
  text-align: center;
}

/* icon dock */
.dock {
  width: 41px;
  flex: none;
  background: linear-gradient(90deg, #eee 0, #fff 10px, #fff 22px, #bcbcbc 41px);
}
.collapse-strip.dock-top {
  height: 11px;
  text-align: right;
  padding-right: 8px;
  width: 40px;
}
.dock-group {
  width: 39px;
  margin-left: 1px;
  background: #efefef;
  border-bottom: 1px solid #cfcfcf;
  padding-top: 3px;
}
.dock-group .grip { margin-bottom: 1px; }
.dock-item {
  height: 29px;
  display: flex;
  align-items: center;
  justify-content: center;
}
.g-one { height: 42px; }
.g-one .dock-item { height: 32px; }
.g-two { height: 97px; padding-top: 4px; }
.g-two .dock-item { height: 28px; }
.g-three { height: 69px; padding-top: 4px; }
.g-three .dock-item { height: 27px; }
.g-four { height: 41px; }
.g-five { height: 69px; padding-top: 4px; }
.g-five .dock-item { height: 27px; }
.g-six { height: 124px; }
.g-six .dock-item { height: 28px; }
.dock-item.on {
  width: 29px;
  height: 24px;
  margin: 2px 5px;
  background: #b5b5b5;
  border: 1px solid #a5a5a5;
}
.dk-a {
  font: 22px "Liberation Sans", sans-serif;
  letter-spacing: 0;
  color: #333;
  display: flex;
  align-items: center;
}
.dk-a i {
  width: 1px;
  height: 18px;
  background: #333;
  margin-left: 1px;
}
.dk-p {
  font: 22px/1 "DejaVu Sans", sans-serif;
  color: #222;
}
.dk-s {
  font: 22px/1 "DejaVu Math TeX Gyre", "DejaVu Serif", serif;
  color: #222;
  margin-top: 3px;
}

/* right panels */
.panels {
  width: 232px;
  flex: none;
  display: flex;
  flex-direction: column;
}
.panels-top {
  text-align: right;
  padding-right: 6px;
  flex: none;
}
.panel {
  background: #eee;
  display: flex;
  flex-direction: column;
}
.layers {
  height: 494px;
  flex: none;
  border-bottom: 2px solid #cfcfcf;
}
.filter-row {
  height: 32px;
  flex: none;
  display: flex;
  align-items: center;
  padding: 3px 0 0 4px;
  border-bottom: 1px solid #dcdcdc;
}
.kind {
  width: 82px;
  height: 16px;
  display: flex;
  align-items: center;
  background: #f8f8f8;
  border: 1px solid #d0d0d0;
  border-radius: 3px;
  padding-left: 8px;
  font-size: 10.500px;
  color: #444;
  gap: 3px;
}
.kind-chev { margin-left: auto; margin-right: 2px; }
.f-i1 { margin-left: 10px; }
.f-i { margin-left: 9.500px; }
.f-t {
  margin-left: 9.500px;
  width: 15px;
  text-align: center;
  font: bold 13px "DejaVu Serif", serif;
  color: #333;
}
.f-toggle {
  margin-left: 9px;
  width: 9px;
  height: 16px;
  border-radius: 5px;
  background: #f8f8f8;
  border: 1px solid #ddd;
  position: relative;
}
.f-toggle::before {
  content: "";
  position: absolute;
  left: -1px;
  top: -3px;
  width: 9px;
  height: 9px;
  border-radius: 50%;
  background: #222;
}
.blend-row, .lock-row {
  flex: none;
  display: flex;
  align-items: center;
  border-bottom: 1px solid #dcdcdc;
  padding-left: 4px;
  padding-right: 6px;
  color: #aaa;
}
.blend-row { height: 26px; }
.lock-row { height: 29px; gap: 9px; padding-left: 5px; }
.dim-select {
  height: 16px;
  display: flex;
  align-items: center;
  justify-content: space-between;
  background: #f3f3f3;
  border: 1px solid #ddd;
  border-radius: 3px;
  font-size: 10px;
  color: #aaa;
  padding-left: 7px;
}
.blend { width: 132px; padding-right: 4px; padding-left: 7px; }
.pct {
  width: 47px;
  padding-left: 3px;
  margin-left: auto;
}
.pct i {
  height: 100%;
  width: 13px;
  display: flex;
  align-items: center;
  justify-content: center;
  border-left: 1px solid #ddd;
}
.dim-label {
  font-size: 10px;
  color: #aaa;
  margin-left: 3px;
}
.lock-row .dim-label { margin: 0 -3px 0 0; }
.lock-row .fill { margin: 0 -7px 0 auto; }
.lock-row .pct { margin-left: 0; }
.layer-list {
  flex: 1;
  min-height: 0;
  background: linear-gradient(90deg, #eee 215px, #e6e6e6 215px);
}
.layer {
  width: 215px;
  height: 31px;
  display: flex;
  align-items: center;
  border-bottom: 1px solid #dcdcdc;
}
.vis {
  width: 31px;
  height: 100%;
  flex: none;
  display: flex;
  align-items: center;
  justify-content: center;
  border-right: 1px solid #dcdcdc;
  background: #eee;
}
.chk {
  display: block;
  width: 12px;
  height: 12px;
  flex: none;
  background: #f2f2f2;
  border: 1px solid #d8d8d8;
}
.layer-t {
  width: 44px;
  flex: none;
  text-align: center;
  font: bold 14px "DejaVu Serif", serif;
  color: #333;
}
.layer-name {
  font-size: 10px;
  color: #555;
  white-space: nowrap;
}
.layer-name.small { font-size: 9px; }
.layer.picked { background: #b2cbe7; }
.thumb {
  position: relative;
  width: 36px;
  height: 26px;
  margin: 0 6px 0 2px;
  flex: none;
  background-image:
    linear-gradient(#222, #222), linear-gradient(#222, #222), linear-gradient(#222, #222), linear-gradient(#222, #222),
    linear-gradient(#222, #222), linear-gradient(#222, #222), linear-gradient(#222, #222), linear-gradient(#222, #222);
  background-repeat: no-repeat;
  background-position:
    0 0, 100% 0, 0 100%, 100% 100%,
    0 0, 100% 0, 0 100%, 100% 100%;
  background-size:
    12px 1px, 12px 1px, 12px 1px, 12px 1px,
    1px 9px, 1px 9px, 1px 9px, 1px 9px;
}
.thumb::after {
  content: "";
  position: absolute;
  inset: 2px;
  background: #fff;
}
.layer-name.bg { color: #3e4a58; }
.layer-lock {
  margin-left: auto;
  margin-right: 17px;
  color: #2b3a4a;
}
.panel-foot {
  height: 24px;
  flex: none;
  display: flex;
  align-items: center;
  border-top: 1px solid #dcdcdc;
}
.layers-foot {
  padding-left: 38px;
  gap: 10.700px;
}
.fx {
  font: italic 15px "Liberation Serif", serif;
  color: #999;
  width: 15px;
  text-align: center;
}
.history {
  margin-top: 2px;
  height: 493px;
  flex: none;
  border-bottom: 2px solid #cfcfcf;
}
.history-body {
  flex: 1;
  min-height: 0;
  display: flex;
  overflow: hidden;
}
.history-list {
  width: 215px;
  flex: none;
  margin-top: -9px;
}
.hrow {
  height: 21.950px;
  display: flex;
  align-items: center;
  border-bottom: 1px solid #dcdcdc;
  font-size: 10px;
  color: #555;
}
.hrow .chk {
  margin: 0 14px 0 6px;
}
.hrow svg {
  width: 15px;
  margin-right: 11px;
}
.h-t {
  width: 15px;
  margin-right: 11px;
  text-align: center;
  font: bold 16px/1 "DejaVu Serif", serif;
  color: #222;
}
.hrow.picked {
  background: #b2cbe7;
  color: #3e4a58;
}
.hrow.picked .chk {
  background: transparent;
  border-color: #a3bad5;
}
.history-scroll {
  flex: 1;
  position: relative;
  background: #e6e6e6;
}
.thumb-bar {
  position: absolute;
  left: 3px;
  right: 4px;
  bottom: 2px;
  height: 273px;
  border-radius: 5px;
  background: #b8b8b8;
}
.history-foot {
  justify-content: flex-end;
  padding-right: 27px;
  gap: 17px;
}
.foot-trash { margin-left: -6px; }
.info {
  margin-top: 2px;
  flex: 1;
}
.info-grid {
  flex: none;
  height: 112px;
  display: grid;
  grid-template-columns: 115px 1fr;
  grid-template-rows: 76px 36px;
}
.info-cell {
  display: flex;
  align-items: center;
  padding: 10px 0 0 5px;
  border-bottom: 1px solid #dcdcdc;
  position: relative;
}
.info-cell svg {
  align-self: flex-start;
  margin-top: 13px;
}
.info-cell:nth-child(odd) {
  border-right: 1px solid #dcdcdc;
}
.info-cell.low {
  border-bottom: none;
  padding-top: 1px;
}
.info-cell.low svg {
  align-self: center;
  margin-top: 0;
}
.info-labels {
  width: 23px;
  margin-left: -1px;
  display: flex;
  flex-direction: column;
  align-items: flex-end;
  font-size: 10px;
  line-height: 12px;
  color: #777;
  white-space: nowrap;
}
.info-foot {
  flex: 1;
  background: #dcdcdc;
  padding-top: 2px;
}
.info-foot .grip {
  display: block;
  height: 4px;
  background-size: 20px 4px;
}
```
